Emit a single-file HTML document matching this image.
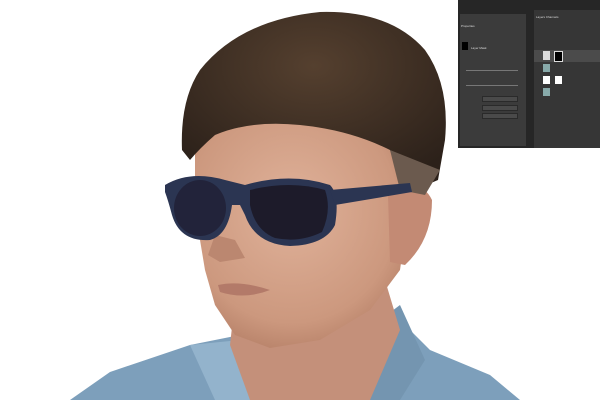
<!DOCTYPE html>
<html><head><style>
html,body{margin:0;padding:0;width:600px;height:400px;overflow:hidden;background:#fff;font-family:"Liberation Sans",sans-serif}
.ps{position:absolute;left:458px;top:0;width:142px;height:148px;background:#262626}
.p{position:absolute;background:#3b3b3b}
.t{position:absolute;color:#ddd;font-size:3px;white-space:nowrap}
.b{position:absolute;background:#4a4a4a;border:1px solid #2a2a2a}
</style></head><body>
<svg width="600" height="400" style="position:absolute;left:0;top:0">
<defs>
<radialGradient id="sk" cx="0.45" cy="0.4" r="0.7"><stop offset="0" stop-color="#e0b29a"/><stop offset="0.7" stop-color="#cc987e"/><stop offset="1" stop-color="#ad775f"/></radialGradient>
<radialGradient id="hr" cx="0.5" cy="0.3" r="0.7"><stop offset="0" stop-color="#55402f"/><stop offset="1" stop-color="#2c211a"/></radialGradient>
</defs>
<path d="M70 400 L110 372 L190 345 L240 335 L400 320 L430 350 L490 375 L520 400Z" fill="#7d9fbb"/>
<path d="M190 345 L215 400 L250 400 L240 340Z" fill="#93b3cc"/>
<path d="M380 320 L400 305 L425 360 L400 400 L370 400Z" fill="#7495b0"/>
<path d="M235 300 L385 280 L400 330 L370 400 L250 400 L230 345Z" fill="#c4907a"/>
<path d="M195 150 L215 130 L300 118 L390 140 L410 200 L400 270 L370 310 L320 340 L270 348 L235 335 L215 305 L205 270 L200 240 L195 200Z" fill="url(#sk)"/>
<path d="M215 235 L208 255 L220 262 L245 258 L235 240Z" fill="#bb8770"/>
<path d="M388 195 Q420 175 432 200 Q432 240 405 265 L390 262Z" fill="#c38a74"/>
<path d="M182 150 Q180 100 200 70 Q240 20 320 12 Q390 10 425 50 Q450 85 445 140 L438 180 L410 192 L400 175 L390 150 Q350 130 300 125 Q250 120 215 135 Q200 148 190 160Z" fill="url(#hr)"/>
<path d="M390 150 L440 170 L425 195 L400 190Z" fill="#6b5a4e"/>
<path d="M218 285 Q240 280 270 290 Q245 300 220 292Z" fill="#b37a69"/>
<path d="M165 185 Q190 170 225 180 L245 185 Q290 172 330 185 Q340 195 335 225 Q325 245 290 246 Q255 244 245 215 L240 205 L232 205 Q228 235 210 240 Q180 242 172 215 Q168 200 165 192Z" fill="#2b3552"/>
<ellipse cx="200" cy="208" rx="26" ry="28" fill="#22233a"/>
<path d="M250 190 Q290 180 325 190 Q332 210 322 232 Q300 243 275 238 Q255 230 250 205Z" fill="#1d1b2a"/>
<path d="M330 190 L410 183 L412 192 L335 205Z" fill="#2b3552"/>
</svg>
<div class="ps">
 <div class="p" style="left:2px;top:14px;width:66px;height:132px"></div>
 <div class="p" style="left:76px;top:10px;width:66px;height:138px;background:#363636"></div>
 <div class="t" style="left:3px;top:24px">Properties</div>
 <div class="t" style="left:78px;top:15px">Layers Channels</div>
 <div style="position:absolute;left:4px;top:42px;width:6px;height:8px;background:#000"></div>
 <div class="t" style="left:13px;top:46px">Layer Mask</div>
 <div style="position:absolute;left:8px;top:70px;width:52px;height:1px;background:#777"></div>
 <div style="position:absolute;left:8px;top:85px;width:52px;height:1px;background:#777"></div>
 <div class="b" style="left:24px;top:96px;width:34px;height:4px"></div>
 <div class="b" style="left:24px;top:105px;width:34px;height:4px"></div>
 <div class="b" style="left:24px;top:113px;width:34px;height:4px"></div>
 <div style="position:absolute;left:76px;top:50px;width:66px;height:12px;background:#4b4b4b"></div>
 <div style="position:absolute;left:85px;top:51px;width:7px;height:9px;background:#ddd"></div>
 <div style="position:absolute;left:96px;top:51px;width:7px;height:9px;background:#000;border:1px solid #ddd"></div>
 <div style="position:absolute;left:85px;top:64px;width:7px;height:8px;background:#8aa"></div>
 <div style="position:absolute;left:85px;top:76px;width:7px;height:8px;background:#fff"></div>
 <div style="position:absolute;left:97px;top:76px;width:7px;height:8px;background:#fff"></div>
 <div style="position:absolute;left:85px;top:88px;width:7px;height:8px;background:#8aa"></div>
</div>
</body></html>
